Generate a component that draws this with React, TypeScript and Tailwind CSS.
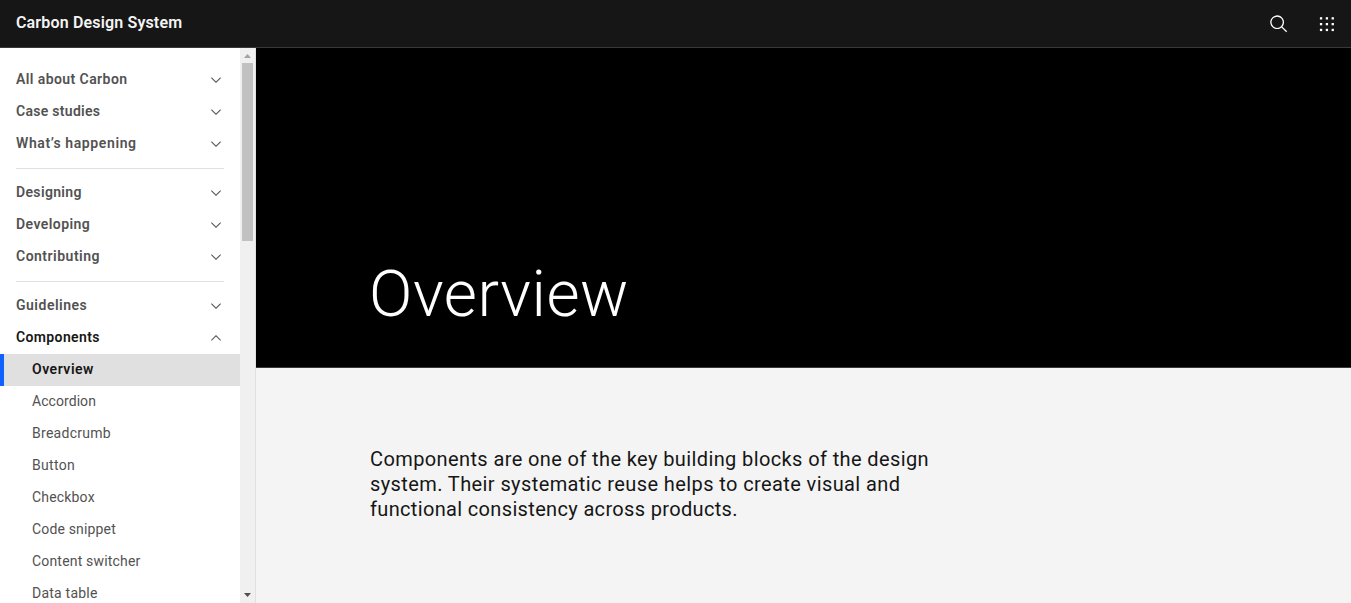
type NavEntry = { label: string; tracking: string; open?: boolean };

const sections: NavEntry[][] = [
  [
    { label: "All about Carbon", tracking: "tracking-[0.42px]" },
    { label: "Case studies", tracking: "tracking-[0.29px]" },
    { label: "What’s happening", tracking: "tracking-[0.61px]" },
  ],
  [
    { label: "Designing", tracking: "tracking-[0.35px]" },
    { label: "Developing", tracking: "tracking-[0.44px]" },
    { label: "Contributing", tracking: "tracking-[0.49px]" },
  ],
  [
    { label: "Guidelines", tracking: "tracking-[0.5px]" },
    { label: "Components", tracking: "tracking-[0.37px]", open: true },
  ],
];

const pages: NavEntry[] = [
  { label: "Accordion", tracking: "tracking-[0.06px]" },
  { label: "Breadcrumb", tracking: "tracking-[0.28px]" },
  { label: "Button", tracking: "tracking-[0.3px]" },
  { label: "Checkbox", tracking: "tracking-[0.18px]" },
  { label: "Code snippet", tracking: "tracking-[0.16px]" },
  { label: "Content switcher", tracking: "tracking-[0.18px]" },
  { label: "Data table", tracking: "tracking-[0.23px]" },
];

function Chevron({ up = false }: { up?: boolean }) {
  return (
    <svg viewBox="0 0 16 16" className="size-4 fill-[#525252]" aria-hidden="true">
      {up ? <path d="M8 5l5 5-.7.7L8 6.4l-4.3 4.3L3 10z" /> : <path d="M8 11L3 6l.7-.7L8 9.6l4.3-4.3.7.7z" />}
    </svg>
  );
}

function Header() {
  return (
    <header className="flex h-12 shrink-0 items-center justify-between border-b border-[#393939] bg-[#161616] pl-4">
      <span className="pb-px text-base leading-5 font-semibold tracking-[0.16px] text-[#f4f4f4]">
        Carbon Design System
      </span>
      <div className="flex h-full">
        <button className="flex w-12 items-center justify-center" aria-label="Search">
          <svg viewBox="0 0 32 32" className="size-5 fill-white">
            <path
              transform="translate(-1 -0.8)"
              d="M30 28.59L22.45 21A11 11 0 1 0 21 22.45L28.59 30zM5 14a9 9 0 1 1 9 9 9 9 0 0 1-9-9z"
            />
          </svg>
        </button>
        <button className="flex w-12 items-center justify-center" aria-label="Switcher">
          <svg viewBox="0 0 20 20" className="size-5 fill-white">
            {[3.2, 9, 14.8].map((y) =>
              [2.9, 8.75, 14.6].map((x) => <rect key={`${x}-${y}`} x={x} y={y} width="2.3" height="2.3" />),
            )}
          </svg>
        </button>
      </div>
    </header>
  );
}

function Scrollbar() {
  return (
    <div className="flex w-[15px] shrink-0 flex-col items-center bg-[#f0f0f0]">
      <svg viewBox="0 0 15 15" className="h-[15px] w-[15px] shrink-0 fill-[#a3a3a3]">
        <path d="M4 10L7.5 6L11 10z" />
      </svg>
      <div className="h-[178px] w-[11px] shrink-0 bg-[#c1c1c1]" />
      <div className="flex-1" />
      <svg viewBox="0 0 15 15" className="h-[15px] w-[15px] shrink-0 fill-[#505050]">
        <path d="M4 5L11 5L7.5 9z" />
      </svg>
    </div>
  );
}

function Sidebar() {
  return (
    <aside className="flex w-64 shrink-0 border-r border-[#e0e0e0] bg-white">
      <nav className="w-60 overflow-hidden pt-4 text-sm">
        {sections.map((section, i) => (
          <div key={section[0].label}>
            {i > 0 && <hr className="mx-4 my-2 border-t border-[#e0e0e0]" />}
            {section.map(({ label, tracking, open }) => (
              <div
                key={label}
                className={`flex h-8 items-center justify-between pr-4 pl-4 font-semibold ${open ? "text-[#161616]" : "text-[#525252]"}`}
              >
                <span className={`pb-0.5 leading-[18px] ${tracking}`}>{label}</span>
                <Chevron up={open} />
              </div>
            ))}
          </div>
        ))}
        <div className="flex h-8 items-center border-l-4 border-[#0f62fe] bg-[#e0e0e0] pl-7 font-semibold text-[#161616]">
          <span className="pb-0.5 leading-[18px] tracking-[0.52px]">Overview</span>
        </div>
        {pages.map(({ label, tracking }) => (
          <div key={label} className="flex h-8 items-center pl-8 text-[#525252]">
            <span className={`pb-0.5 leading-[18px] ${tracking}`}>{label}</span>
          </div>
        ))}
      </nav>
      <Scrollbar />
    </aside>
  );
}

export default function App() {
  return (
    <div className="flex h-[603px] w-[1351px] flex-col overflow-hidden bg-[#f4f4f4] font-[Roboto,sans-serif]">
      <Header />
      <div className="flex min-h-0 flex-1">
        <Sidebar />
        <main className="flex-1">
          <div className="flex h-80 items-end border-b border-[#393939] bg-black pb-[35px] pl-[113px]">
            <h1 className="text-[64px] leading-[74px] font-light tracking-[0.55px] text-white">Overview</h1>
          </div>
          <p className="pt-[79px] pl-[114px] text-xl leading-[25px] text-[#161616]">
            <span className="block tracking-[0.39px]">Components are one of the key building blocks of the design</span>
            <span className="block tracking-[0.4px]">system. Their systematic reuse helps to create visual and</span>
            <span className="block tracking-[0.34px]">functional consistency across products.</span>
          </p>
        </main>
      </div>
    </div>
  );
}
